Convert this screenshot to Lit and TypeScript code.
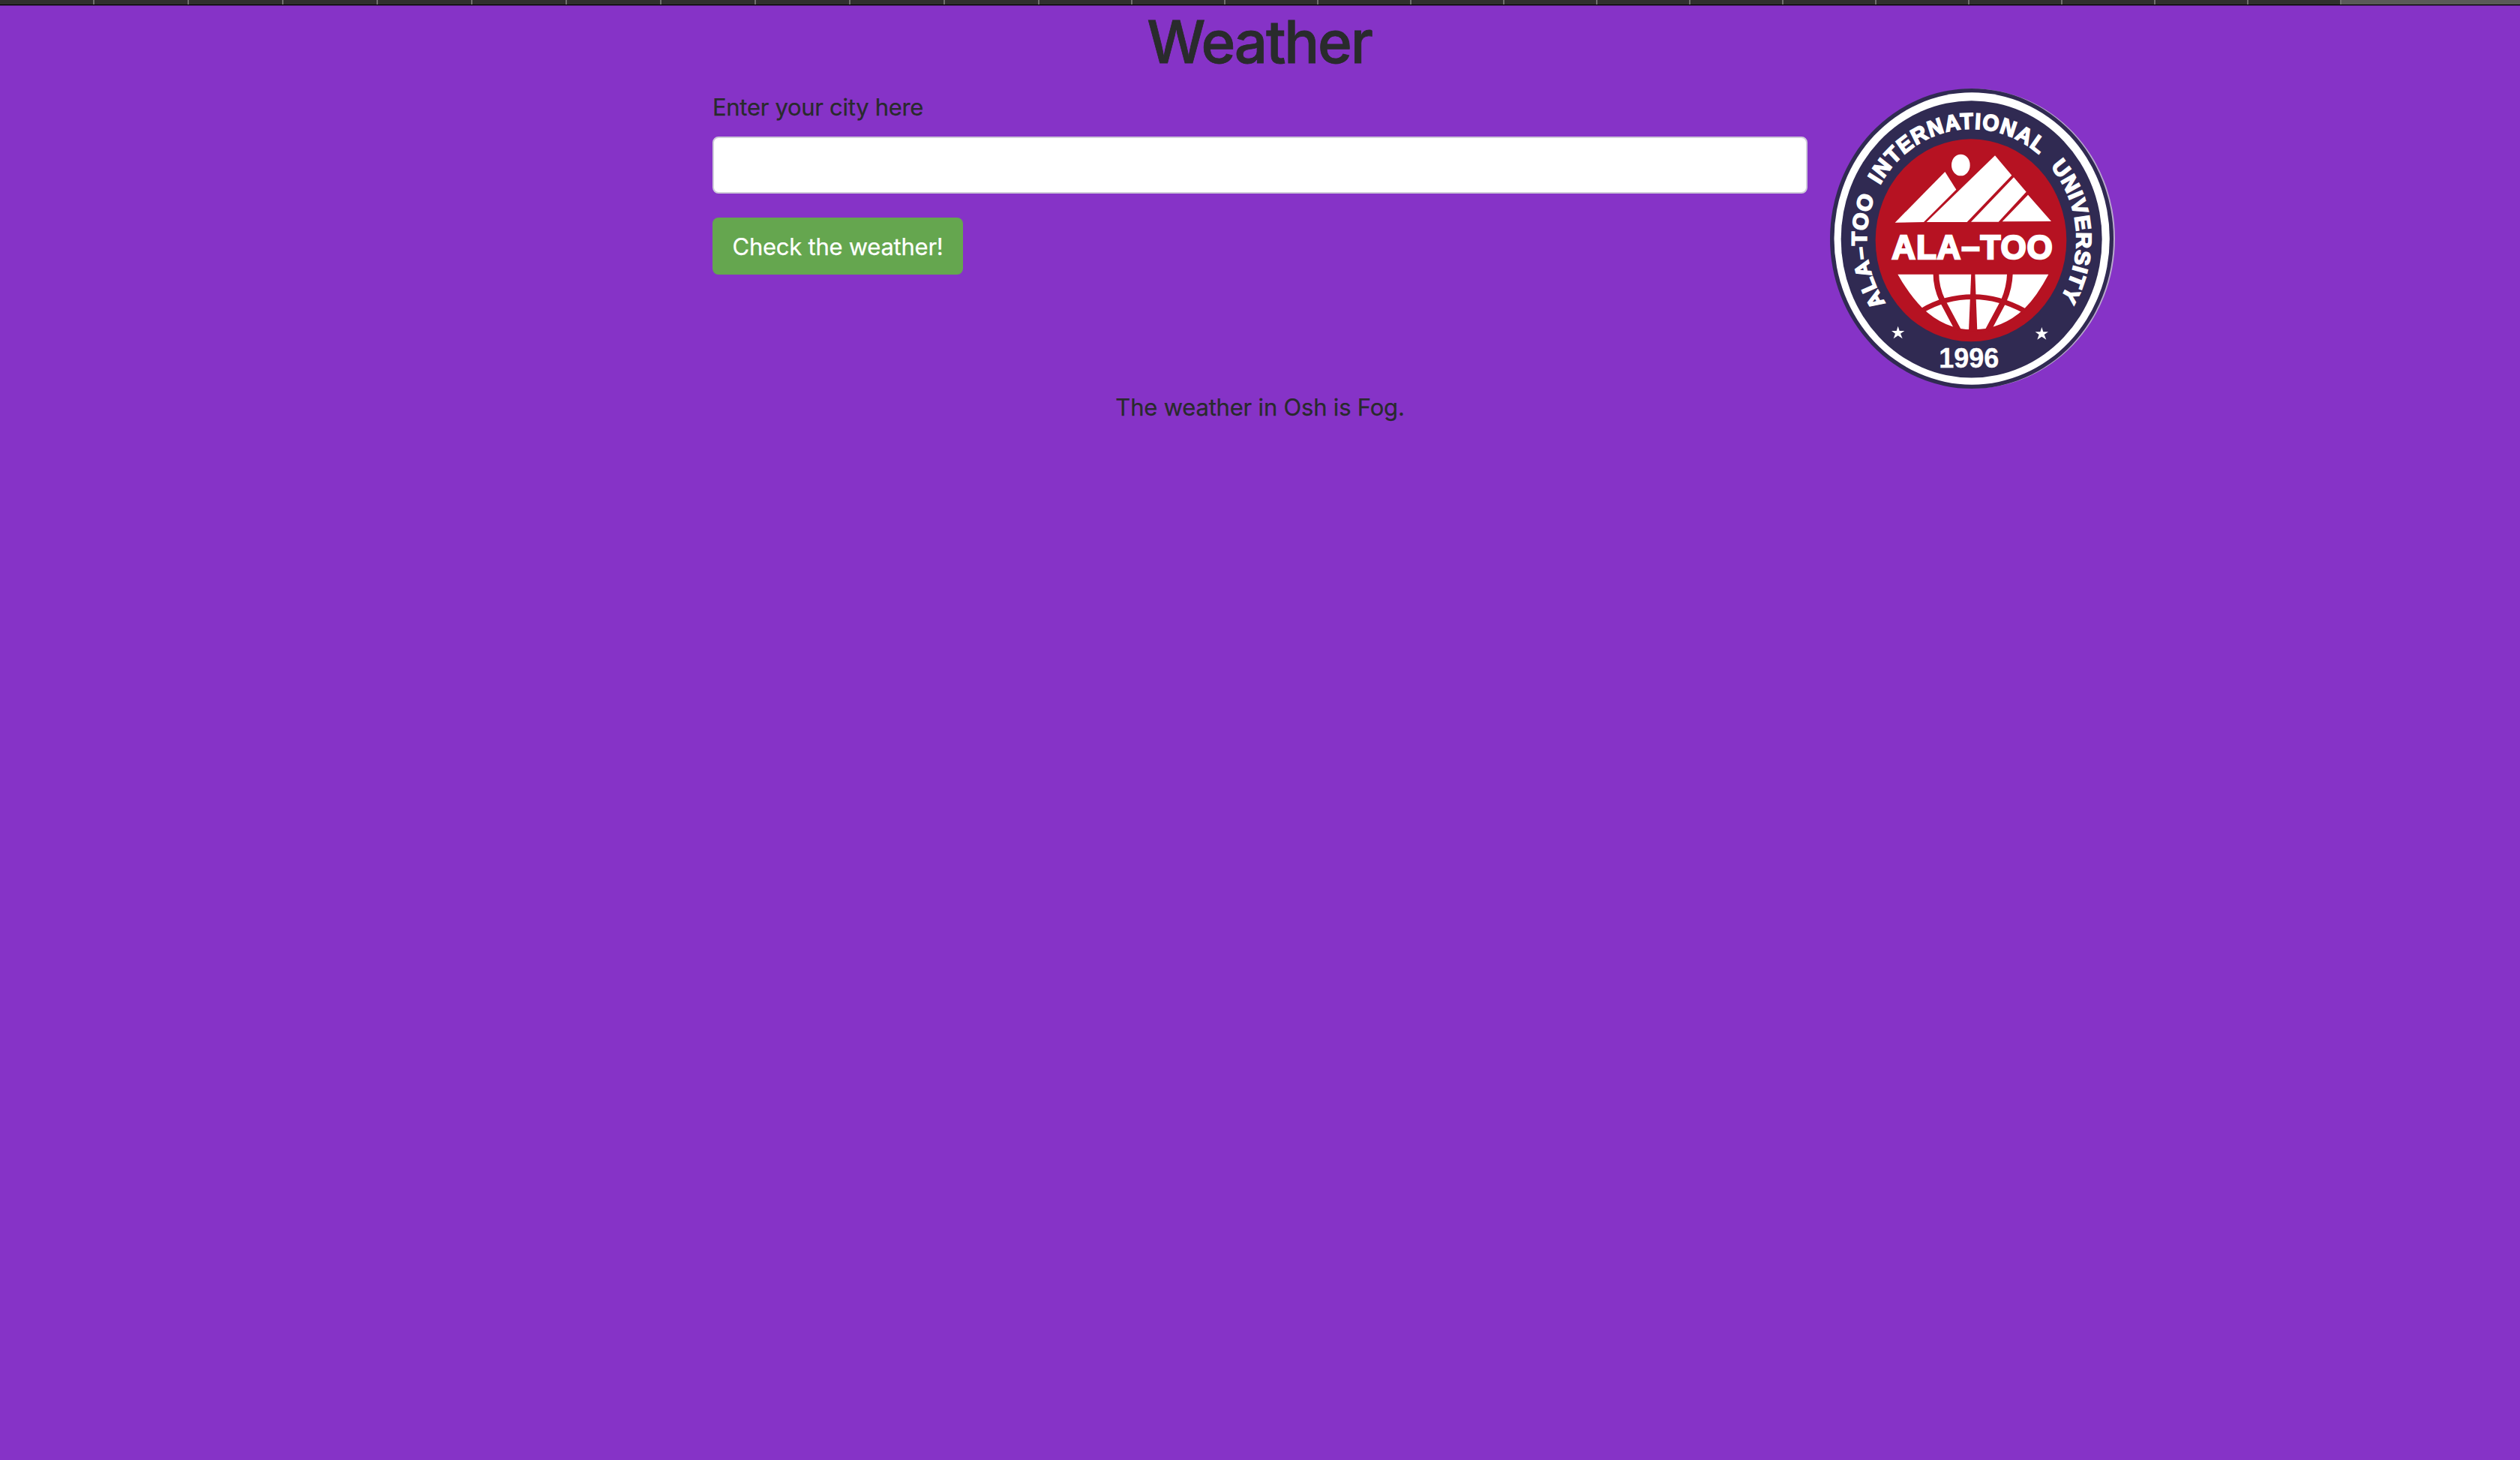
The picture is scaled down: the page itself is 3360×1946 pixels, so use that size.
import { LitElement, html, css, svg } from "lit";
import { customElement, state } from "lit/decorators.js";

const TABS = [...Array(11).fill(126), ...Array(14).fill(124)];

/** Clockwise arc on a circle round the origin; angles in degrees, 0 pointing left. */
function arc(radius: number, from: number, to: number): string {
  const point = (deg: number) => {
    const a = (deg * Math.PI) / 180;
    return `${(-Math.cos(a) * radius).toFixed(2)} ${(-Math.sin(a) * radius).toFixed(2)}`;
  };
  return `M${point(from)}A${radius} ${radius} 0 0 1 ${point(to)}`;
}

const RING_WORDS = [
  { id: "word-name", text: "ALA–TOO", from: -35, to: 25, length: 423 },
  { id: "word-scope", text: "INTERNATIONAL", from: 29.3, to: 132, length: 738 },
  { id: "word-kind", text: "UNIVERSITY", from: 138.8, to: 214, length: 536 },
];

@customElement("university-logo")
export class UniversityLogo extends LitElement {
  static styles = css`
    :host { display: block; width: 380px; height: 400px; }
    .logo { display: block; width: 100%; height: 100%; }
    .navy { fill: #302a52; }
    .edge { fill: #b9a9cc; }
    .white { fill: #fff; }
    .red { fill: #b61222; }
    .gap { fill: none; stroke: #b61222; }
    text { font-family: "Liberation Sans", Arial, sans-serif; font-weight: 700; fill: #fff; stroke: #fff; }
    .ring { font-size: 85px; stroke-width: 5; }
    .name { font-size: 132px; stroke-width: 7; }
    .year { font-size: 108px; stroke-width: 1; }
  `;

  render() {
    return html`<svg class="logo" viewBox="60 54 1140 1200" role="img" aria-label="Ala-Too International University">
      <ellipse class="edge" cx="634" cy="654" rx="566" ry="599" />
      <ellipse class="navy" cx="627" cy="654" rx="567" ry="600" />
      <ellipse class="white" cx="627.5" cy="654" rx="551" ry="584" />
      <ellipse class="navy" cx="626" cy="656.5" rx="522" ry="554" />
      <ellipse class="red" cx="624" cy="661" rx="382" ry="405" />
      <g transform="translate(626 658) scale(1 1.055)">
        ${RING_WORDS.map(
          (w) => svg`<path id=${w.id} d=${arc(420, w.from, w.to)} fill="none" />
            <text class="ring" textLength=${w.length}><textPath href=${"#" + w.id} textLength=${w.length}>${w.text}</textPath></text>`,
        )}
      </g>
      <ellipse class="white" cx="583" cy="360" rx="37" ry="43" />
      <path class="white" d="M320 590L520 387L565 458L435 588Z" />
      <path class="white" d="M446 588L720 322L787 401L608 588Z" />
      <path class="white" d="M624 587L795 409L845 467L734 587Z" />
      <path class="white" d="M749 586L852 479L945 585Z" />
      <text class="name" x="307" y="735" textLength="643">ALA<tspan dy="-4">–</tspan><tspan dy="4">TOO</tspan></text>
      <path class="white" d="M331 797H934Q888 884 838 934Q748 1018 632 1018Q520 1018 430 932Q378 880 331 797Z" />
      <path class="gap" stroke-width="23" d="M484 790Q484 850 510 903L573 1021M780 790Q778 850 755 903L692 1021" />
      <path class="gap" stroke-width="20" d="M428 942Q520 887 633 887Q735 887 840 944" />
      <path class="red" d="M625 790H640L649 1024H615Z" />
      <path class="white" d="M332 1004L338 1023H358L342 1034L350 1054L332 1042L314 1054L321 1034L306 1023H326Z" />
      <path class="white" d="M907 1008L913 1027H933L917 1038L925 1058L907 1046L889 1058L896 1038L881 1027H901Z" />
      <text class="year" x="496" y="1169" textLength="240">1996</text>
    </svg>`;
  }
}

@customElement("app-root")
export class AppRoot extends LitElement {
  static styles = css`
    :host {
      display: block;
      min-height: 1946px;
      background: #8633c7;
      color: #292b2c;
      font: 400 31px/48px Inter, "Liberation Sans", sans-serif;
      -webkit-text-stroke: 0.25px;
    }
    .tabs {
      display: flex;
      height: 8px;
      box-sizing: border-box;
      background: #5a5a58;
      border-bottom: 1px solid #5c2a86;
      box-shadow: inset 0 -1px #000;
    }
    .tab {
      flex: none;
      height: 6px;
      box-sizing: border-box;
      background: #30302e;
      border-right: 2px solid #70706e;
    }
    .container { width: 2280px; margin: 0 auto; padding-top: 4px; }
    .title {
      margin: 0 0 18px;
      font-size: 78px;
      line-height: 88px;
      font-weight: 500;
      letter-spacing: -2.2px;
      text-indent: -2px;
      text-align: center;
      -webkit-text-stroke: 0.8px;
    }
    .row { display: flex; justify-content: flex-end; gap: 30px; height: 400px; }
    .form { width: 1460px; }
    .label { display: block; padding-top: 1px; margin-bottom: 15px; letter-spacing: -0.3px; }
    .input {
      display: block;
      box-sizing: border-box;
      width: 100%;
      height: 76px;
      margin: 0 0 32px;
      padding: 16px 24px;
      border: 2px solid #cfccd9;
      border-radius: 8px;
      background: #fff;
      font: inherit;
      outline: none;
    }
    .button {
      display: block;
      box-sizing: border-box;
      width: 334px;
      height: 76px;
      padding: 2px 0 0;
      border: 0;
      border-radius: 8px;
      background: #65a64f;
      color: #fff;
      font: inherit;
      line-height: 40px;
      letter-spacing: -0.25px;
      white-space: nowrap;
    }
    .result { padding-top: 1px; text-align: center; letter-spacing: -0.2px; }
  `;

  @state() private report = "The weather in Osh is Fog.";

  render() {
    return html`
      <div class="tabs">${TABS.map((w) => html`<div class="tab" style="width:${w}px"></div>`)}</div>
      <main class="container">
        <h1 class="title">Weather</h1>
        <div class="row">
          <form class="form">
            <label class="label" for="city">Enter your city here</label>
            <input class="input" id="city" type="text" />
            <button class="button" type="button">Check the weather!</button>
          </form>
          <university-logo></university-logo>
        </div>
        <div class="result">${this.report}</div>
      </main>
    `;
  }
}
